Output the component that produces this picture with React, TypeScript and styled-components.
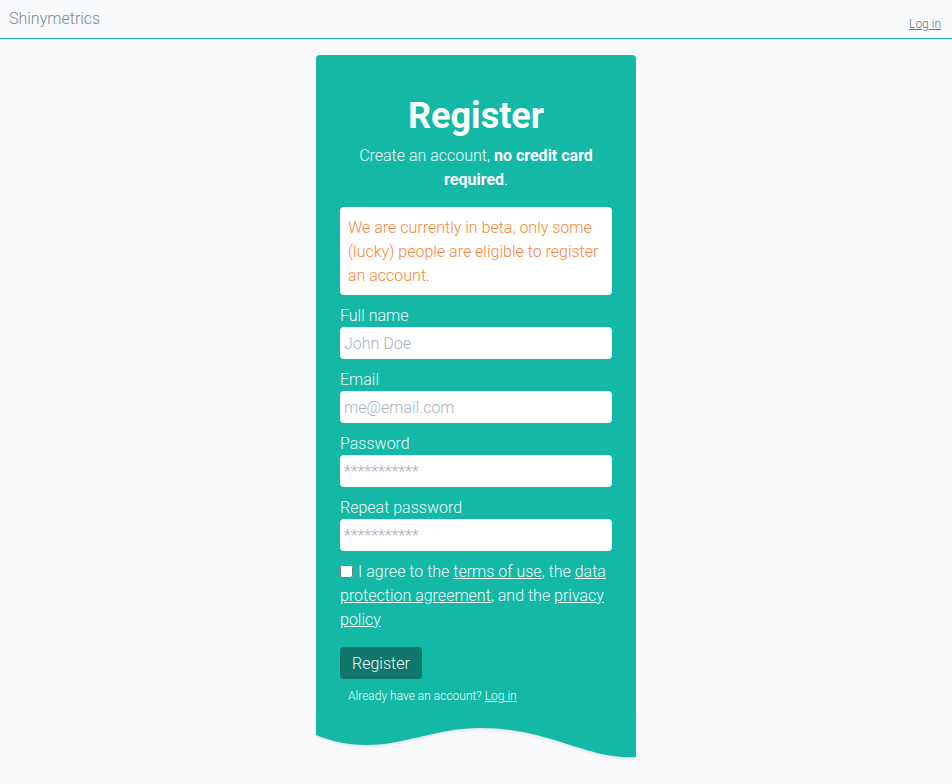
import React from "react";
import styled, { createGlobalStyle } from "styled-components";

const Global = createGlobalStyle`
  html, body { margin: 0; padding: 0; background: #f8fafc; }
  body { font-family: Roboto, "Noto Sans", sans-serif; font-weight: 300; }
  * { box-sizing: border-box; }
`;

const Header = styled.header`
  height: 39px;
  border-bottom: 1px solid #14b8a6;
  display: flex;
  justify-content: space-between;
  align-items: flex-start;
  padding: 0 11px 0 9px;
`;

const Brand = styled.div`
  font-size: 16px;
  line-height: 20px;
  margin-top: 9px;
  color: #7c8799;
`;

const HeaderLink = styled.a`
  font-size: 12px;
  line-height: 16px;
  margin-top: 16px;
  color: #64748b;
  text-decoration: underline;
`;

const Main = styled.main`
  display: flex;
  justify-content: center;
  padding-top: 16px;
`;

const Card = styled.div`
  width: 320px;
  display: flex;
  flex-direction: column;
`;

const CardBody = styled.div`
  background: #13b8a7;
  border-radius: 4px 4px 0 0;
  padding: 39px 24px 8px;
  color: #f0fdfa;
  display: flex;
  flex-direction: column;
`;

const Title = styled.h1`
  margin: 0;
  font-size: 36px;
  line-height: 44px;
  font-weight: 700;
  text-align: center;
  color: #ffffff;
`;

const Subtitle = styled.p`
  margin: 6px 0 0;
  font-size: 16px;
  line-height: 24px;
  text-align: center;
  color: #f0fdfa;
  b { font-weight: 700; color: #ffffff; }
`;

const Alert = styled.div`
  margin-top: 15px;
  background: #ffffff;
  border-radius: 4px;
  padding: 9px 8px 7px;
  font-size: 16px;
  line-height: 24px;
  color: #f7863a;
`;

const Field = styled.label`
  display: flex;
  flex-direction: column;
  margin-top: 8px;
  font-size: 16px;
  line-height: 24px;
  color: #f0fdfa;
  span { position: relative; top: 1px; }
`;

const Input = styled.input`
  height: 32px;
  border: none;
  border-radius: 4px;
  background: #ffffff;
  padding: 0 4px;
  font-family: Roboto, "Noto Sans", sans-serif;
  font-weight: 300;
  font-size: 16px;
  color: #334155;
  outline: none;
  &::placeholder { color: #a9b1bf; }
`;

const Agree = styled.div`
  margin-top: 9px;
  margin-bottom: -1px;
  font-size: 16px;
  line-height: 24px;
  color: #f0fdfa;
  a { color: #f0fdfa; text-decoration: underline; }
`;

const Check = styled.input`
  margin: 0 5px 0 0;
  width: 13px;
  height: 13px;
  vertical-align: -1px;
`;

const Button = styled.button`
  align-self: flex-start;
  margin-top: 16px;
  height: 32px;
  padding: 0 12px;
  border: none;
  border-radius: 4px;
  background: #0f766b;
  color: #e6fffb;
  font-family: Roboto, "Noto Sans", sans-serif;
  font-weight: 300;
  font-size: 16px;
`;

const Small = styled.p`
  margin: 8px 0 0;
  padding-left: 8px;
  font-size: 12px;
  line-height: 18px;
  color: #e6fffb;
  a { color: #e6fffb; text-decoration: underline; }
`;

const Wave = styled.svg`
  display: block;
  width: 320px;
  height: 48px;
  filter: drop-shadow(0 2px 1px rgba(15, 23, 42, 0.08));
`;

export default function App() {
  return (
    <>
      <Global />
      <Header>
        <Brand>Shinymetrics</Brand>
        <HeaderLink href="#">Log in</HeaderLink>
      </Header>
      <Main>
        <Card>
          <CardBody>
            <Title>Register</Title>
            <Subtitle>
              Create an account, <b>no credit card required</b>.
            </Subtitle>
            <Alert>
              We are currently in beta, only some (lucky) people are eligible to register an account.
            </Alert>
            <Field>
              <span>Full name</span>
              <Input placeholder="John Doe" />
            </Field>
            <Field>
              <span>Email</span>
              <Input placeholder="me@email.com" />
            </Field>
            <Field>
              <span>Password</span>
              <Input type="password" placeholder="***********" />
            </Field>
            <Field>
              <span>Repeat password</span>
              <Input type="password" placeholder="***********" />
            </Field>
            <Agree>
              <Check type="checkbox" />
              I agree to the <a href="#">terms of use</a>, the <a href="#">data protection agreement</a>, and the{" "}
              <a href="#">privacy policy</a>
            </Agree>
            <Button>Register</Button>
            <Small>
              Already have an account? <a href="#">Log in</a>
            </Small>
          </CardBody>
          <Wave viewBox="0 0 320 48" preserveAspectRatio="none">
            <path
              d="M0,0 H320 V44 C300,45 285,42 251,31 C215,19 190,15 164,15 C120,15 90,32 51,32 C30,32 15,28 0,22 Z"
              fill="#13b8a7"
            />
          </Wave>
        </Card>
      </Main>
    </>
  );
}
